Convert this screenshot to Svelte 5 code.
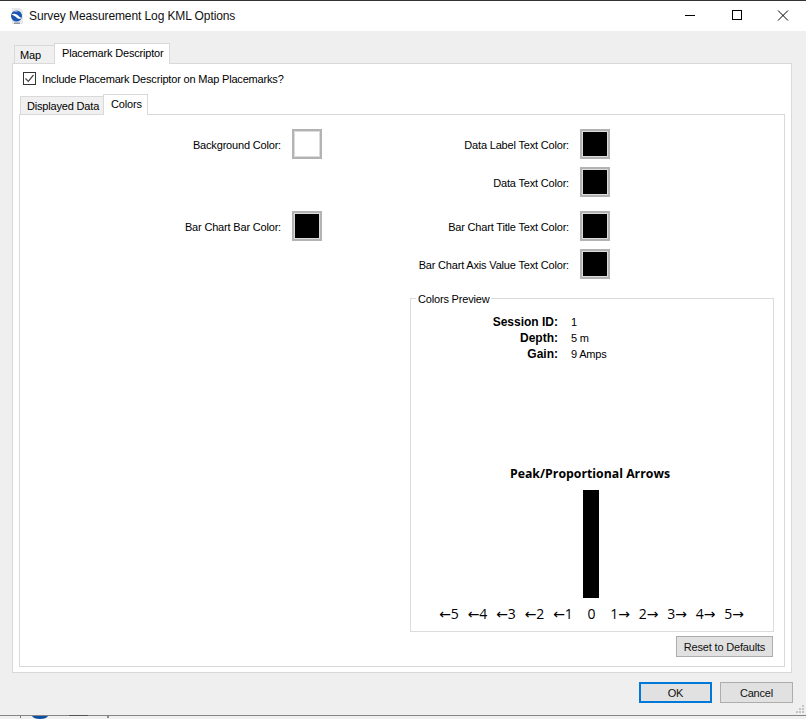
<script>
  const leftRows = [
    { label: 'Background Color:', color: '#ffffff', gap: 0 },
    { label: 'Bar Chart Bar Color:', color: '#000000', gap: 52 }
  ];
  const rightRows = [
    { label: 'Data Label Text Color:', gap: 0 },
    { label: 'Data Text Color:', gap: 8 },
    { label: 'Bar Chart Title Text Color:', gap: 14 },
    { label: 'Bar Chart Axis Value Text Color:', gap: 8 }
  ];
  const info = [
    ['Session ID:', '1'],
    ['Depth:', '5 m'],
    ['Gain:', '9 Amps']
  ];
  const axis = ['←5', '←4', '←3', '←2', '←1', '0', '1→', '2→', '3→', '4→', '5→'];
</script>

<div class="window">
  <header class="titlebar">
    <svg class="appicon" width="16" height="17" viewBox="0 0 16 17">
      <path d="M3 0h8l3 3v13H3z" fill="#e6e8ec" />
      <circle cx="7.500" cy="8" r="5.500" fill="#1a55b0" />
      <path d="M2.500 6.500C5 5 8 6 10 8.500c1 1 2 1.500 3 1-1.500 2-4 1.500-5.500 0C6 8 4 7 2.500 6.500z" fill="#fff" />
      <path d="M5 4c1-1.200 3-1.500 5-.5-1.500-.3-3.500 0-5 .5z" fill="#cfe0f7" />
      <path d="M5 14.500h6v1.500H5z" fill="#8d97a8" />
    </svg>
    <span class="title">Survey Measurement Log KML Options</span>
    <div class="controls">
      <svg class="ctl" width="46" height="30" viewBox="0 0 46 30"><path d="M17 14.500h10" stroke="#000" /></svg>
      <svg class="ctl" width="46" height="30" viewBox="0 0 46 30"><rect x="18.500" y="9.500" width="9" height="9" fill="none" stroke="#000" /></svg>
      <svg class="ctl" width="46" height="30" viewBox="0 0 46 30"><path d="M18 9.500l10 10M28 9.500l-10 10" stroke="#000" /></svg>
    </div>
  </header>

  <main class="body">
    <div class="tabs outer">
      <div class="tab t-map">Map</div>
      <div class="tab active t-place">Placemark Descriptor</div>
    </div>
    <section class="panel outerpanel">
      <label class="check">
        <span class="box">
          <svg width="11" height="11" viewBox="0 0 11 11"><path d="M1.500 5.500l2.800 2.800 5.200-6.300" fill="none" stroke="#444" stroke-width="1.200" /></svg>
        </span>
        Include Placemark Descriptor on Map Placemarks?
      </label>
      <div class="tabs inner">
        <div class="tab t-data">Displayed Data</div>
        <div class="tab active t-colors">Colors</div>
      </div>
      <section class="panel innerpanel">
        <div class="col left">
          {#each leftRows as r}
            <div class="row" style="margin-top: {r.gap}px">
              <span class="lbl">{r.label}</span>
              <span class="swatch"><i style="background: {r.color}"></i></span>
            </div>
          {/each}
        </div>
        <div class="col right">
          <div class="rows">
            {#each rightRows as r}
              <div class="row" style="margin-top: {r.gap}px">
                <span class="lbl">{r.label}</span>
                <span class="swatch"><i style="background: #000"></i></span>
              </div>
            {/each}
          </div>
          <fieldset class="preview">
            <legend>Colors Preview</legend>
            <dl class="info">
              {#each info as [k, v]}
                <dt>{k}</dt><dd>{v}</dd>
              {/each}
            </dl>
            <h3>Peak/Proportional Arrows</h3>
            <div class="bar"></div>
            <div class="axis">
              {#each axis as a}<span>{a}</span>{/each}
            </div>
          </fieldset>
          <div class="resetrow"><button class="btn reset">Reset to Defaults</button></div>
        </div>
      </section>
    </section>
    <footer class="actions">
      <button class="btn ok">OK</button>
      <button class="btn">Cancel</button>
    </footer>
  </main>
  <svg class="grip" width="8" height="8" viewBox="0 0 8 8" fill="#c4c4c4">
    <rect x="6" y="0" width="2" height="2" /><rect x="3" y="3" width="2" height="2" /><rect x="6" y="3" width="2" height="2" /><rect x="0" y="6" width="2" height="2" /><rect x="3" y="6" width="2" height="2" /><rect x="6" y="6" width="2" height="2" />
  </svg>
  <div class="under">
    <i class="bit b1"></i>
    <svg class="blue" width="16" height="3" viewBox="0 0 16 3"><path d="M0 0h16c-1 2-4 3-8 3S1 2 0 0z" fill="#0b4ea2" /></svg>
    <i class="bit b2"></i>
    <i class="bit b3"></i>
  </div>
</div>

<style>
  :global(body) {
    margin: 0;
    background: #fff;
  }
  .window {
    position: relative;
    width: 806px;
    height: 719px;
    overflow: hidden;
    display: flex;
    flex-direction: column;
    font-family: "Liberation Sans", Arial, sans-serif;
    font-size: 11px;
    letter-spacing: -0.18px;
    color: #000;
    background: #efefef;
    border-top: 1px solid #333;
    box-sizing: border-box;
  }
  .titlebar {
    height: 30px;
    flex: none;
    background: #fff;
    display: flex;
    align-items: center;
    padding-left: 9px;
  }
  .appicon { flex: none; margin-right: 4px; }
  .title { font-size: 12px; letter-spacing: -0.1px; color: #111; }
  .controls { margin-left: auto; display: flex; }
  .ctl { display: block; }
  .body {
    flex: 1;
    display: flex;
    flex-direction: column;
    padding: 12px 14px 0 12px;
    min-height: 0;
  }
  .tabs { display: flex; align-items: flex-end; position: relative; z-index: 1; height: 20px; }
  .tabs.outer { padding-left: 2px; }
  .tabs.inner { margin-top: 8px; margin-left: 1px; }
  .tab {
    height: 17px;
    line-height: 18px;
    box-sizing: content-box;
    border: 1px solid #d9d9d9;
    border-bottom: none;
    background: #f0f0f0;
    margin-right: -1px;
  }
  .tab.active {
    height: 20px;
    line-height: 18px;
    background: #fff;
    margin-bottom: -1px;
    position: relative;
    z-index: 2;
  }
  .t-map { width: 34px; padding-left: 5px; }
  .t-place { width: 107px; padding-left: 7px; }
  .t-data { width: 76px; padding-left: 6px; }
  .t-colors { width: 36px; padding-left: 7px; }
  .panel {
    background: #fff;
    border: 1px solid #d9d9d9;
    box-sizing: border-box;
  }
  .outerpanel {
    width: 780px;
    height: 610px;
    padding: 7px 6px 5px 6px;
    display: flex;
    flex-direction: column;
  }
  .check { display: flex; align-items: center; gap: 6px; height: 15px; margin-left: 4px; }
  .box {
    width: 11px;
    height: 11px;
    border: 1px solid #333;
    display: block;
    flex: none;
    background: #fff;
  }
  .box svg { display: block; }
  .innerpanel {
    flex: 1;
    display: flex;
    padding: 14px 0 0 0;
  }
  .col { display: flex; flex-direction: column; align-items: flex-end; }
  .col.left { width: 302px; }
  .col.right { width: 452px; }
  .rows {
    width: 288px;
    align-self: flex-start;
    display: flex;
    flex-direction: column;
    align-items: flex-end;
  }
  .row {
    display: flex;
    align-items: center;
    gap: 11px;
    height: 30px;
  }
  .lbl { padding-top: 2px; }
  .swatch {
    width: 30px;
    height: 30px;
    box-sizing: border-box;
    border: 2px solid #b3b3b3;
    padding: 1px;
    background: #dcdcdc;
    display: block;
  }
  .swatch i { display: block; width: 100%; height: 100%; }
  .preview {
    width: 364px;
    height: 341px;
    box-sizing: border-box;
    margin: 12px 0 0 0;
    padding: 0;
    border: 1px solid #dcdcdc;
    display: block;
    min-width: 0;
  }
  legend {
    padding: 0 2px;
    margin-left: 5px;
    line-height: 14px;
    position: relative;
    top: 1px;
  }
  .info {
    display: grid;
    grid-template-columns: 147px 1fr;
    column-gap: 13px;
    margin: 9px 0 0 0;
    line-height: 16px;
  }
  dt { font-weight: bold; text-align: right; font-size: 12px; letter-spacing: 0; }
  dd { margin: 0; }
  h3 {
    margin: 104px 0 0 0;
    padding-right: 4px;
    font-size: 12.300px;
    letter-spacing: 0;
    line-height: 16px;
    text-align: center;
    font-family: "Open Sans", "Liberation Sans", sans-serif;
    font-weight: 700;
  }
  .bar {
    width: 16px;
    height: 108px;
    background: #000;
    margin: 8px auto 0;
    position: relative;
    left: -1px;
  }
  .axis {
    display: flex;
    justify-content: center;
    gap: 8.500px;
    margin-top: 7px;
    line-height: 18px;
    font-family: "Open Sans", "DejaVu Sans", sans-serif;
    font-size: 14px;
    letter-spacing: 0;
    position: relative;
    left: -0.500px;
  }
  .axis span { width: 20px; text-align: center; white-space: nowrap; }
  .resetrow { margin-top: 4px; display: flex; justify-content: flex-end; width: 100%; }
  .btn {
    width: 73px;
    height: 21px;
    box-sizing: border-box;
    background: #e1e1e1;
    border: 1px solid #adadad;
    font: 11px "Liberation Sans", Arial, sans-serif;
    letter-spacing: -0.18px;
    color: #111;
    padding: 0;
    display: block;
  }
  .reset { width: 97px; margin-right: 1px; }
  .actions {
    display: flex;
    justify-content: flex-end;
    gap: 8px;
    margin-top: 9px;
    margin-right: -1px;
  }
  .ok { border: 2px solid #0078d7; }
  .grip { position: absolute; right: 2px; bottom: 6px; display: block; }
  .under {
    position: absolute;
    left: 0;
    right: 0;
    bottom: 0;
    height: 3px;
    background: #f0f0f0;
    border-top: 1px solid #858585;
  }
  .blue { position: absolute; left: 32px; top: 0; display: block; }
  .bit { position: absolute; display: block; }
  .b1 { left: 20px; top: 0; width: 1px; height: 2px; background: #777; }
  .b2 { left: 69px; top: -1px; width: 19px; height: 1px; background: #555; }
  .b3 { left: 107px; top: 0; width: 2px; height: 2px; background: #888; }
</style>
